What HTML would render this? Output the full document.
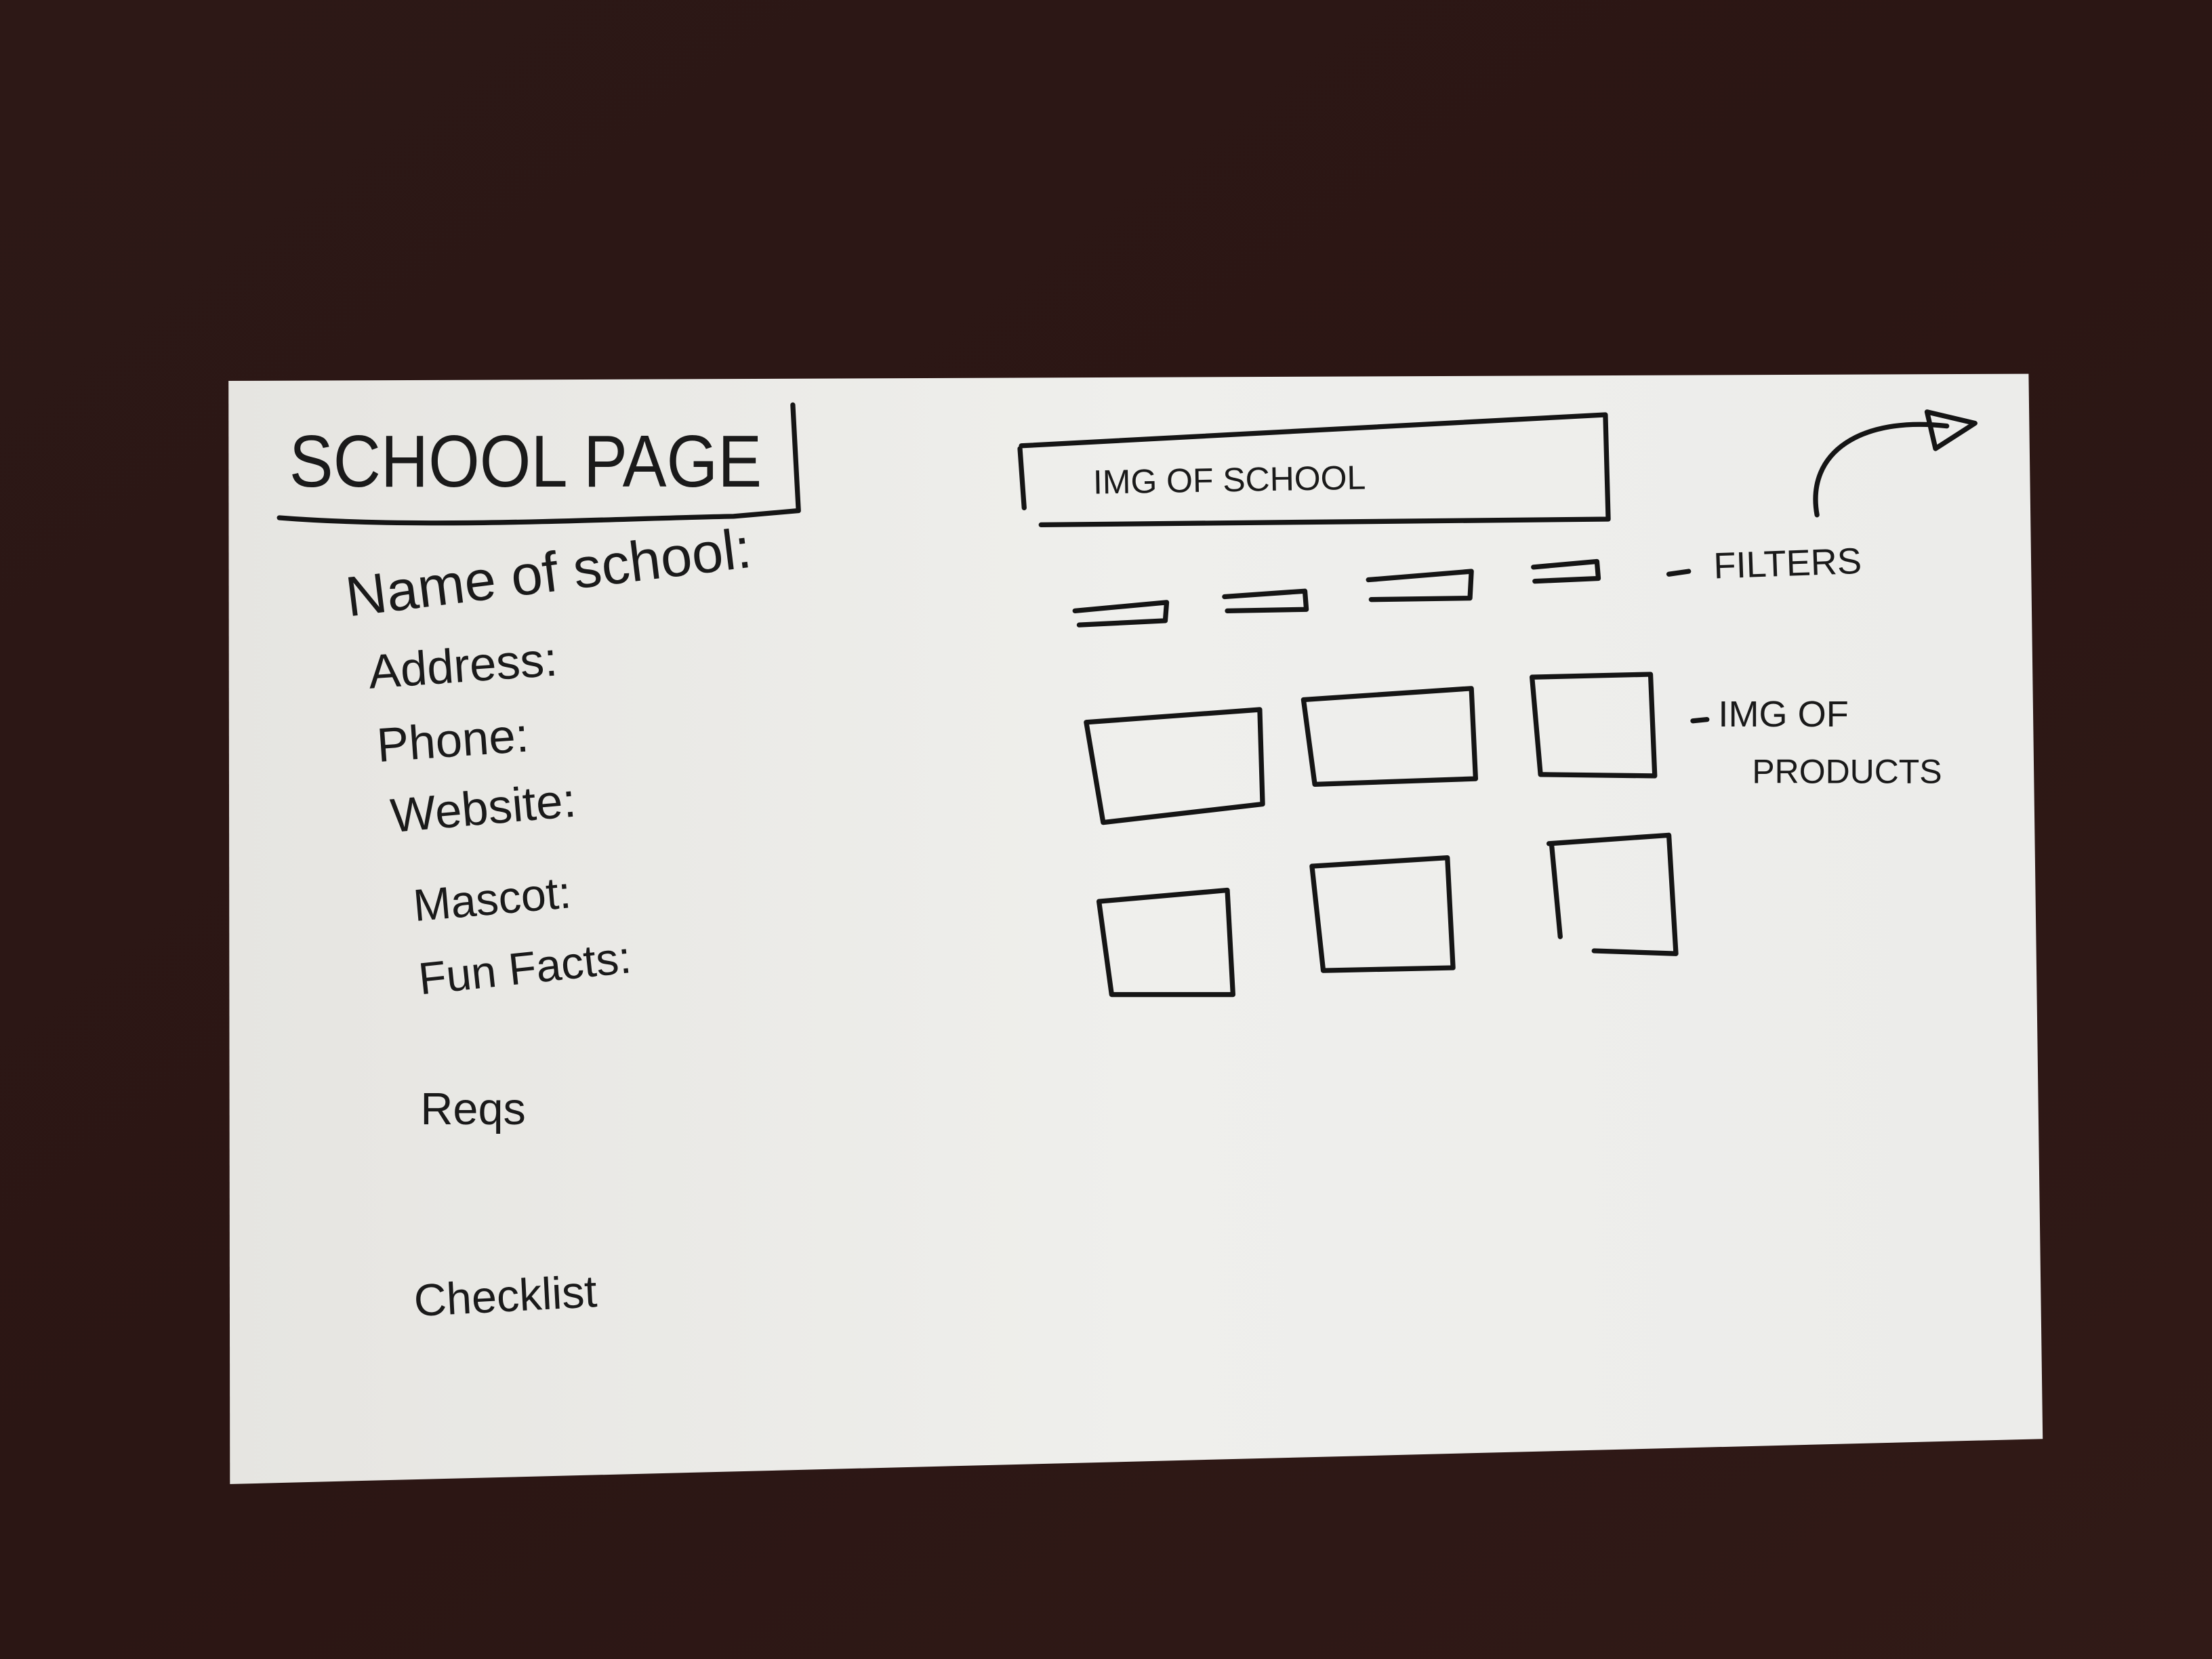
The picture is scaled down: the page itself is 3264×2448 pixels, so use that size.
<!DOCTYPE html>
<html><head><meta charset="utf-8"><style>
html,body{margin:0;padding:0;background:#2a1715;}
svg{display:block}
text{font-family:"Liberation Sans",sans-serif;fill:#1a1a1a}
</style></head><body>
<svg width="3264" height="2448" viewBox="0 0 1568 1176" preserveAspectRatio="none" xmlns="http://www.w3.org/2000/svg">
<defs>
<linearGradient id="bg" x1="0" y1="0" x2="1" y2="1">
<stop offset="0" stop-color="#2d1816"/><stop offset="0.5" stop-color="#2b1614"/><stop offset="1" stop-color="#311a17"/>
</linearGradient>
<linearGradient id="card" x1="0" y1="0" x2="1" y2="0">
<stop offset="0" stop-color="#e6e5e1"/><stop offset="0.5" stop-color="#efefec"/><stop offset="1" stop-color="#ececea"/>
</linearGradient>
</defs>
<rect width="1568" height="1176" fill="url(#bg)"/>
<polygon points="162,270 1438,265 1448,1020 163,1052" fill="url(#card)"/>
<g fill="none" stroke="#151515" stroke-width="3.5" stroke-linecap="round" stroke-linejoin="round">
<path d="M198,367 C300,375 420,368 520,366 L566,362 L562,287"/>
<path d="M723,318 L726,360 M738,372 L1140,368 L1138,294 L724,316"/>
<path d="M1288,365 C1280,320 1320,295 1380,302 M1366,292 L1400,300 L1372,318 Z"/>
<path d="M762,433 L827,427 L826,440 L765,443 M868,423 L925,419 L926,432 L870,433 M970,411 L1043,405 L1042,424 L972,425 M1087,402 L1132,398 L1133,410 L1088,412"/>
<path d="M770,512 L893,503 L895,570 L782,583 Z"/>
<path d="M924,496 L1043,488 L1046,552 L932,556 Z"/>
<path d="M1086,480 L1170,478 L1173,550 L1092,549 Z"/>
<path d="M779,639 L870,631 L874,705 L788,705 Z"/>
<path d="M930,614 L1026,608 L1030,686 L938,688 Z"/>
<path d="M1098,598 L1183,592 L1188,676 L1130,674 M1100,600 L1106,664"/>
<path d="M1183,407 L1197,405 M1200,511 L1210,510"/>
</g>
<text x="205" y="345" font-size="52" textLength="335" lengthAdjust="spacingAndGlyphs">SCHOOL PAGE</text>
<text x="775" y="350" font-size="24" transform="rotate(-1 775 350)">IMG OF SCHOOL</text>
<text x="247" y="437" font-size="40" transform="rotate(-7 247 437)">Name of school:</text>
<text x="262" y="488" font-size="34" transform="rotate(-4 262 488)">Address:</text>
<text x="268" y="540" font-size="34" transform="rotate(-4 268 540)">Phone:</text>
<text x="278" y="590" font-size="34" transform="rotate(-5 278 590)">Website:</text>
<text x="294" y="653" font-size="32" transform="rotate(-5 294 653)">Mascot:</text>
<text x="298" y="705" font-size="32" transform="rotate(-6 298 705)">Fun Facts:</text>
<text x="298" y="797" font-size="32">Reqs</text>
<text x="294" y="933" font-size="32" transform="rotate(-3 294 933)">Checklist</text>
<text x="1215" y="410" font-size="26" transform="rotate(-2 1215 410)">FILTERS</text>
<text x="1218" y="515" font-size="26">IMG OF</text>
<text x="1242" y="555" font-size="24">PRODUCTS</text>
</svg>
</body></html>
